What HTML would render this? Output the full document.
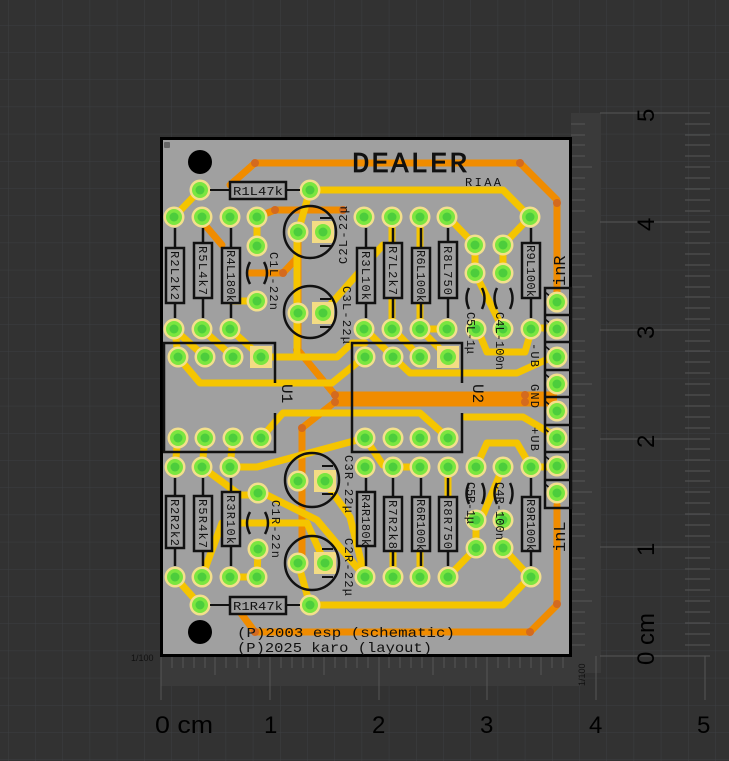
<!DOCTYPE html>
<html><head><meta charset="utf-8"><style>
html,body{margin:0;padding:0;background:#323232;}
svg{display:block;}
.m{font-family:"Liberation Mono",monospace;}
.s{font-family:"Liberation Sans",sans-serif;}
</style></head><body>
<svg width="729" height="761" viewBox="0 0 729 761" xmlns="http://www.w3.org/2000/svg">
<defs>
<pattern id="g" x="8" y="25" width="27.2" height="27.2" patternUnits="userSpaceOnUse">
<path d="M0 0H27.2M0 0V27.2" stroke="#3c3f42" stroke-width="1" fill="none"/>
</pattern>
<g id="p"><circle r="10.5" fill="#f3e08c"/><circle r="8" fill="#7ae640"/><circle r="4.5" fill="#4ccd3c"/></g>
<g id="q"><rect x="-11" y="-11" width="22" height="22" fill="#f3dc84"/><circle r="8" fill="#7ae640"/><circle r="4.5" fill="#4ccd3c"/></g>
</defs>
<rect width="729" height="761" fill="#323232"/>
<rect width="729" height="761" fill="url(#g)"/>
<rect x="161" y="656" width="420" height="30" fill="#3a3a3a"/>
<rect x="571" y="113" width="30" height="560" fill="#3a3a3a"/>
<g stroke="#555" stroke-width="1">
<path d="M172 656V668M183 656V668M194 656V668M205 656V668M215 656V675M226 656V668M237 656V668M248 656V668M259 656V668M281 656V668M292 656V668M303 656V668M313 656V668M324 656V675M335 656V668M346 656V668M357 656V668M368 656V668M389 656V668M400 656V668M411 656V668M422 656V668M433 656V675M444 656V668M455 656V668M466 656V668M476 656V668M498 656V668M509 656V668M520 656V668M531 656V668M541 656V675M552 656V668M563 656V668"/>
<path d="M161 656V700M270 656V700M379 656V700M487 656V700M596 656V700M705 656V700"/>
<path d="M571 645H585M571 634H585M571 623H585M571 612H585M571 601H592M571 590H585M571 579H585M571 569H585M571 558H585M571 536H585M571 525H585M571 514H585M571 503H585M571 492H592M571 481H585M571 471H585M571 460H585M571 449H585M571 428H585M571 417H585M571 406H585M571 395H585M571 384H592M571 373H585M571 362H585M571 351H585M571 341H585M571 319H585M571 308H585M571 297H585M571 287H585M571 276H592M571 265H585M571 254H585M571 243H585M571 232H585M571 211H585M571 200H585M571 189H585M571 178H585M571 167H592M571 156H585M571 145H585M571 135H585M571 124H585"/>
<path d="M600 656H710M600 547H710M600 439H710M600 330H710M600 222H710M600 113H710"/>
<path d="M685 645H710M685 634H710M685 623H710M685 612H710M685 601H710M685 590H710M685 579H710M685 569H710M685 558H710M685 536H710M685 525H710M685 514H710M685 503H710M685 492H710M685 481H710M685 471H710M685 460H710M685 449H710M685 428H710M685 417H710M685 406H710M685 395H710M685 384H710M685 373H710M685 362H710M685 351H710M685 341H710M685 319H710M685 308H710M685 297H710M685 287H710M685 276H710M685 265H710M685 254H710M685 243H710M685 232H710M685 211H710M685 200H710M685 189H710M685 178H710M685 167H710M685 156H710M685 145H710M685 135H710M685 124H710"/>
</g>
<g class="s" fill="#000" font-size="24">
<text x="155" y="733" textLength="58" lengthAdjust="spacingAndGlyphs">0 cm</text>
<text x="264" y="733">1</text>
<text x="372" y="733">2</text>
<text x="480" y="733">3</text>
<text x="589" y="733">4</text>
<text x="697" y="733">5</text>
<text transform="translate(654,122) rotate(-90)">5</text>
<text transform="translate(654,231) rotate(-90)">4</text>
<text transform="translate(654,339) rotate(-90)">3</text>
<text transform="translate(654,448) rotate(-90)">2</text>
<text transform="translate(654,556) rotate(-90)">1</text>
<text transform="translate(654,665) rotate(-90)">0 cm</text>
</g>
<text class="s" x="131" y="661" font-size="9" fill="#111">1/100</text>
<text class="s" transform="translate(585,686) rotate(-90)" font-size="9" fill="#111">1/100</text>
<rect x="161.5" y="138.5" width="409" height="517" fill="#a0a0a0" stroke="#000" stroke-width="3"/>
<rect x="164" y="142" width="6" height="6" fill="#666" rx="1"/>
<circle cx="200" cy="162" r="12" fill="#000"/>
<circle cx="200" cy="632" r="12" fill="#000"/>
<g fill="none" stroke="#f08c00" stroke-width="7" stroke-linejoin="round" stroke-linecap="round">
<path d="M230 185L255 163H520L557 200V300"/>
<path d="M557 505V605L530 632H255L240 612"/>
<path d="M257 217L275 210H343"/>
<path d="M250 273H283L298 257"/>
<path d="M298 232V350L335 395"/>
<path d="M335 402L302 428V563"/>
<path d="M205 225L222 245"/>
<path d="M335 399H557" stroke-width="15" stroke-linecap="butt"/>
</g>
<g fill="#d46a1e"><circle cx="255" cy="163" r="4"/><circle cx="520" cy="163" r="4"/><circle cx="557" cy="203" r="4"/><circle cx="557" cy="604" r="4"/><circle cx="530" cy="632" r="4"/><circle cx="255" cy="632" r="4"/><circle cx="275" cy="210" r="4"/><circle cx="343" cy="210" r="4"/><circle cx="283" cy="273" r="4"/><circle cx="297" cy="350" r="4"/><circle cx="302" cy="428" r="4"/><circle cx="335" cy="395" r="4"/><circle cx="335" cy="402" r="4"/><circle cx="525" cy="395" r="4"/><circle cx="525" cy="402" r="4"/></g>
<g fill="none" stroke="#f5c500" stroke-width="7" stroke-linejoin="round" stroke-linecap="round">
<path d="M310 190H503L530 217L503 245"/>
<path d="M310 190L298 232"/>
<path d="M297 232V357"/>
<path d="M200 190L174 217"/>
<path d="M261 357H337L352 343H365"/>
<path d="M174 329L205 357M202 329L233 357M230 329L261 357"/>
<path d="M178 357L200 383H332L363 358"/>
<path d="M393 357L410 373H517L550 358"/>
<path d="M365 329L393 357M393 329L420 357M420 329L448 357M420 329H448"/>
<path d="M392 217V329M420 217V329"/>
<path d="M448 217L475 245V273L503 329"/>
<path d="M477 328L487 352H525L532 328H557"/>
<path d="M503 245V273"/>
<path d="M257 217V246M257 301H230"/>
<path d="M323 313L383 245"/>
<path d="M261 438L283 413H420L447 437"/>
<path d="M465 417H523L557 437"/>
<path d="M230 467H257L350 442L365 438"/>
<path d="M178 438L175 467M205 438L202 467M233 438L230 467"/>
<path d="M202 467L240 495H267L317 520L365 577"/>
<path d="M258 550L257 577H233"/>
<path d="M175 577L200 605"/>
<path d="M202 577L222 523H307L325 563"/>
<path d="M298 563L310 605H503L530 577L503 548"/>
<path d="M476 548L448 577M476 520V548"/>
<path d="M476 467L487 443H517L531 467H557"/>
<path d="M503 467L483 515L476 520"/>
<path d="M393 467H420M448 467V500"/>
<path d="M393 550V577M420 550V577"/>
<path d="M325 482L350 517L365 577"/>
<path d="M365 438L383 465"/>
<path d="M175 329L178 357"/>
</g>
<g>
<use href="#p" x="200" y="190"/><use href="#p" x="310" y="190"/>
<use href="#p" x="174" y="217"/><use href="#p" x="202" y="217"/><use href="#p" x="230" y="217"/><use href="#p" x="257" y="217"/>
<use href="#p" x="364" y="217"/><use href="#p" x="392" y="217"/><use href="#p" x="420" y="217"/><use href="#p" x="447" y="217"/><use href="#p" x="530" y="217"/>
<use href="#p" x="257" y="246"/><use href="#p" x="257" y="301"/>
<use href="#p" x="298" y="232"/><use href="#q" x="323" y="232"/>
<use href="#p" x="298" y="313"/><use href="#q" x="323" y="313"/>
<use href="#p" x="475" y="245"/><use href="#p" x="475" y="273"/><use href="#p" x="476" y="329"/>
<use href="#p" x="503" y="245"/><use href="#p" x="503" y="273"/><use href="#p" x="503" y="329"/>
<use href="#p" x="174" y="329"/><use href="#p" x="202" y="329"/><use href="#p" x="230" y="329"/>
<use href="#p" x="364" y="329"/><use href="#p" x="392" y="329"/><use href="#p" x="420" y="329"/><use href="#p" x="447" y="329"/><use href="#p" x="531" y="329"/>
<use href="#p" x="178" y="357"/><use href="#p" x="205" y="357"/><use href="#p" x="233" y="357"/><use href="#q" x="261" y="357"/>
<use href="#p" x="178" y="438"/><use href="#p" x="205" y="438"/><use href="#p" x="233" y="438"/><use href="#p" x="261" y="438"/>
<use href="#p" x="365" y="357"/><use href="#p" x="393" y="357"/><use href="#p" x="420" y="357"/><use href="#q" x="448" y="357"/>
<use href="#p" x="365" y="438"/><use href="#p" x="393" y="438"/><use href="#p" x="420" y="438"/><use href="#p" x="448" y="438"/>
<use href="#p" x="175" y="467"/><use href="#p" x="202" y="467"/><use href="#p" x="230" y="467"/>
<use href="#p" x="365" y="467"/><use href="#p" x="393" y="467"/><use href="#p" x="420" y="467"/><use href="#p" x="448" y="467"/><use href="#p" x="476" y="467"/><use href="#p" x="503" y="467"/><use href="#p" x="531" y="467"/>
<use href="#p" x="258" y="493"/><use href="#p" x="258" y="549"/>
<use href="#p" x="298" y="481"/><use href="#q" x="325" y="481"/>
<use href="#p" x="298" y="563"/><use href="#q" x="325" y="563"/>
<use href="#p" x="476" y="520"/><use href="#p" x="476" y="548"/><use href="#p" x="503" y="520"/><use href="#p" x="503" y="548"/>
<use href="#p" x="175" y="577"/><use href="#p" x="202" y="577"/><use href="#p" x="230" y="577"/><use href="#p" x="257" y="577"/>
<use href="#p" x="365" y="577"/><use href="#p" x="393" y="577"/><use href="#p" x="420" y="577"/><use href="#p" x="448" y="577"/><use href="#p" x="531" y="577"/>
<use href="#p" x="200" y="605"/><use href="#p" x="310" y="605"/>
</g>
<g fill="none" stroke="#111" stroke-width="2.5">
<rect x="545" y="288" width="26" height="220"/>
<path d="M545 315H571M545 342H571M545 370H571M545 397H571M545 425H571M545 452H571M545 480H571"/>
<path d="M545 292L552 298M545 319L552 325M545 346L552 352M545 374L552 380M545 401L552 407M545 429L552 435M545 456L552 462M545 484L552 490" stroke-width="1.5"/>
</g>
<g><use href="#p" x="557" y="302"/><use href="#p" x="557" y="329"/><use href="#p" x="557" y="357"/><use href="#p" x="557" y="384"/><use href="#p" x="557" y="411"/><use href="#p" x="557" y="438"/><use href="#p" x="557" y="466"/><use href="#p" x="557" y="493"/></g>
<g fill="none" stroke="#111" stroke-width="2.5">
<path d="M275 383V343H164V452H275V413"/>
<path d="M462 383V343H352V452H462V413"/>
<circle cx="310" cy="232" r="26"/><circle cx="310" cy="312" r="26"/>
<circle cx="312" cy="480" r="27"/><circle cx="312" cy="563" r="27"/>
<path d="M320 218H331M320 246H331M320 299H331M320 327H331M322 466H333M322 494H333M322 549H333M322 577H333" stroke-width="2"/>
<path d="M250 262Q244 273 250 284M264 262Q270 273 264 284"/>
<path d="M250 512Q244 523 250 534M265 512Q271 523 265 534"/>
<path d="M469 288Q464 298 469 309M482 288Q487 298 482 309"/>
<path d="M497 288Q492 298 497 309M510 288Q515 298 510 309"/>
<path d="M469 483Q464 493 469 504M482 483Q487 493 482 504"/>
<path d="M497 483Q492 493 497 504M510 483Q515 493 510 504"/>
<path d="M210 190H230M286 190H300M210 605H230M286 605H300" stroke-width="2"/>
<path d="M175 228V248M175 303V318M203 228V243M203 298V318M231 228V248M231 303V318M366 228V248M366 303V318M393 228V243M393 298V318M421 228V248M421 303V318M448 228V242M448 298V318M531 228V243M531 298V318"/>
<path d="M175 478V496M175 548V566M203 478V496M203 551V566M231 478V492M231 546V566M366 478V492M366 546V566M393 478V497M393 551V566M421 478V497M421 551V566M448 478V497M448 551V566M531 478V497M531 551V566"/>
</g>
<g fill="#a0a0a0" stroke="#111" stroke-width="2.5">
<rect x="230" y="182" width="56" height="17"/><rect x="230" y="597" width="56" height="17"/>
<rect x="166" y="248" width="18" height="55"/><rect x="194" y="243" width="18" height="55"/><rect x="222" y="248" width="18" height="55"/>
<rect x="357" y="248" width="18" height="55"/><rect x="384" y="243" width="18" height="55"/><rect x="412" y="248" width="18" height="55"/><rect x="439" y="242" width="18" height="56"/><rect x="522" y="243" width="18" height="55"/>
<rect x="166" y="496" width="18" height="52"/><rect x="194" y="496" width="18" height="55"/><rect x="222" y="492" width="18" height="54"/>
<rect x="357" y="492" width="18" height="54"/><rect x="384" y="497" width="18" height="54"/><rect x="412" y="497" width="18" height="54"/><rect x="439" y="497" width="18" height="54"/><rect x="522" y="497" width="18" height="54"/>
</g>
<g class="m" fill="#111">
<text x="352" y="172" font-size="29" stroke="#111" stroke-width="0.8" textLength="115" lengthAdjust="spacing">DEALER</text>
<text x="465" y="186" font-size="12" textLength="36">RIAA</text>
<text x="233" y="195" font-size="12" textLength="50" lengthAdjust="spacingAndGlyphs">R1L47k</text>
<text x="233" y="610" font-size="12" textLength="50" lengthAdjust="spacingAndGlyphs">R1R47k</text>
<g font-size="12" lengthAdjust="spacingAndGlyphs">
<text transform="translate(171,251) rotate(90)" textLength="49">R2L2k2</text>
<text transform="translate(199,246) rotate(90)" textLength="49">R5L4k7</text>
<text transform="translate(227,250) rotate(90)" textLength="52">R4L180k</text>
<text transform="translate(362,251) rotate(90)" textLength="49">R3L10k</text>
<text transform="translate(389,246) rotate(90)" textLength="49">R7L2k7</text>
<text transform="translate(417,250) rotate(90)" textLength="52">R6L100k</text>
<text transform="translate(444,246) rotate(90)" textLength="49">R8L750</text>
<text transform="translate(527,245) rotate(90)" textLength="52">R9L100k</text>
<text transform="translate(171,499) rotate(90)" textLength="47">R2R2k2</text>
<text transform="translate(199,499) rotate(90)" textLength="49">R5R4k7</text>
<text transform="translate(227,495) rotate(90)" textLength="49">R3R10k</text>
<text transform="translate(362,494) rotate(90)" textLength="52">R4R180k</text>
<text transform="translate(389,500) rotate(90)" textLength="49">R7R2k8</text>
<text transform="translate(417,499) rotate(90)" textLength="52">R6R100k</text>
<text transform="translate(444,500) rotate(90)" textLength="49">R8R750</text>
<text transform="translate(527,499) rotate(90)" textLength="52">R9R100k</text>
<text transform="translate(270,252) rotate(90)" textLength="58">C1L-22n</text>
<text transform="translate(347,264) rotate(-90)" textLength="58">C2L-22μ</text>
<text transform="translate(343,286) rotate(90)" textLength="58">C3L-22μ</text>
<text transform="translate(272,500) rotate(90)" textLength="58">C1R-22n</text>
<text transform="translate(345,455) rotate(90)" textLength="58">C3R-22μ</text>
<text transform="translate(345,538) rotate(90)" textLength="58">C2R-22μ</text>
<text transform="translate(467,312) rotate(90)" textLength="42">C5L-1μ</text>
<text transform="translate(496,312) rotate(90)" textLength="58">C4L-100n</text>
<text transform="translate(467,482) rotate(90)" textLength="42">C5R-1μ</text>
<text transform="translate(496,482) rotate(90)" textLength="58">C4R-100n</text>
<text transform="translate(531,343) rotate(90)" textLength="24">-UB</text>
<text transform="translate(531,384) rotate(90)" textLength="24">GND</text>
<text transform="translate(531,427) rotate(90)" textLength="24">+UB</text>
</g>
<text transform="translate(565,286) rotate(-90)" font-size="17">inR</text>
<text transform="translate(565,552) rotate(-90)" font-size="17">inL</text>
<text transform="translate(282,384) rotate(90)" font-size="16">U1</text>
<text transform="translate(473,384) rotate(90)" font-size="16">U2</text>
<text x="237" y="637" font-size="14" textLength="218" lengthAdjust="spacingAndGlyphs">(P)2003 esp (schematic)</text>
<text x="237" y="652" font-size="14" textLength="195" lengthAdjust="spacingAndGlyphs">(P)2025 karo (layout)</text>
</g>
</svg>
</body></html>
